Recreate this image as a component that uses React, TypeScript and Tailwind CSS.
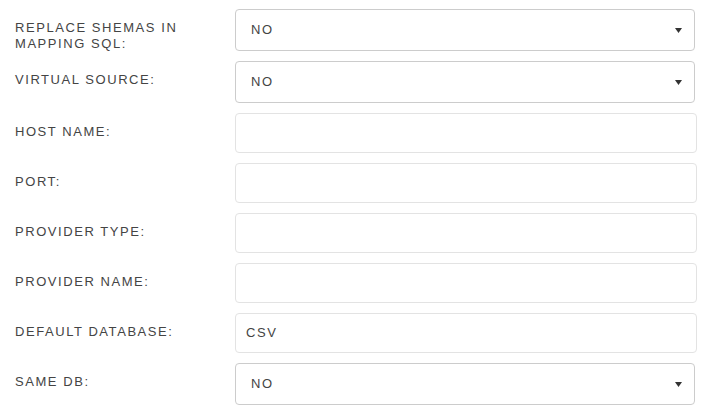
const rows: { label: string[]; kind: 'select' | 'input'; value: string }[] = [
  { label: ['REPLACE SHEMAS IN', 'MAPPING SQL:'], kind: 'select', value: 'NO' },
  { label: ['VIRTUAL SOURCE:'], kind: 'select', value: 'NO' },
  { label: ['HOST NAME:'], kind: 'input', value: '' },
  { label: ['PORT:'], kind: 'input', value: '' },
  { label: ['PROVIDER TYPE:'], kind: 'input', value: '' },
  { label: ['PROVIDER NAME:'], kind: 'input', value: '' },
  { label: ['DEFAULT DATABASE:'], kind: 'input', value: 'CSV' },
  { label: ['SAME DB:'], kind: 'select', value: 'NO' },
];

function SelectBox({ value }: { value: string }) {
  return (
    <div className="w-[460px] h-[42px] border border-[#cccccc] rounded-[4px] bg-white flex items-center pl-[15px] pr-[12px]">
      <span className="flex-1 text-[13px] tracking-[0.12em] text-[#444]">{value}</span>
      <svg width="7" height="5" viewBox="0 0 7 5">
        <polygon points="0,0 7,0 3.5,5" fill="#333" />
      </svg>
    </div>
  );
}

function InputBox({ value }: { value: string }) {
  return (
    <div className="w-[462px] h-[40px] border border-[#e3e3e3] rounded-[4px] bg-white flex items-center pl-[10px]">
      <span className="text-[13px] tracking-[0.12em] text-[#444]">{value}</span>
    </div>
  );
}

export default function App() {
  return (
    <div
      className="w-[715px] h-[419px] bg-white pt-[9px] pl-[15px] flex flex-col gap-[10px]"
      style={{ fontFamily: '"Liberation Sans", Arial, sans-serif' }}
    >
      {rows.map((row, i) => (
        <div key={i} className="flex items-start">
          <div className="w-[220px] pt-[11px] text-[13px] leading-[15.6px] tracking-[0.12em] text-[#444]">
            {row.label.map(line => (
              <div key={line}>{line}</div>
            ))}
          </div>
          {row.kind === 'select' ? <SelectBox value={row.value} /> : <InputBox value={row.value} />}
        </div>
      ))}
    </div>
  );
}
